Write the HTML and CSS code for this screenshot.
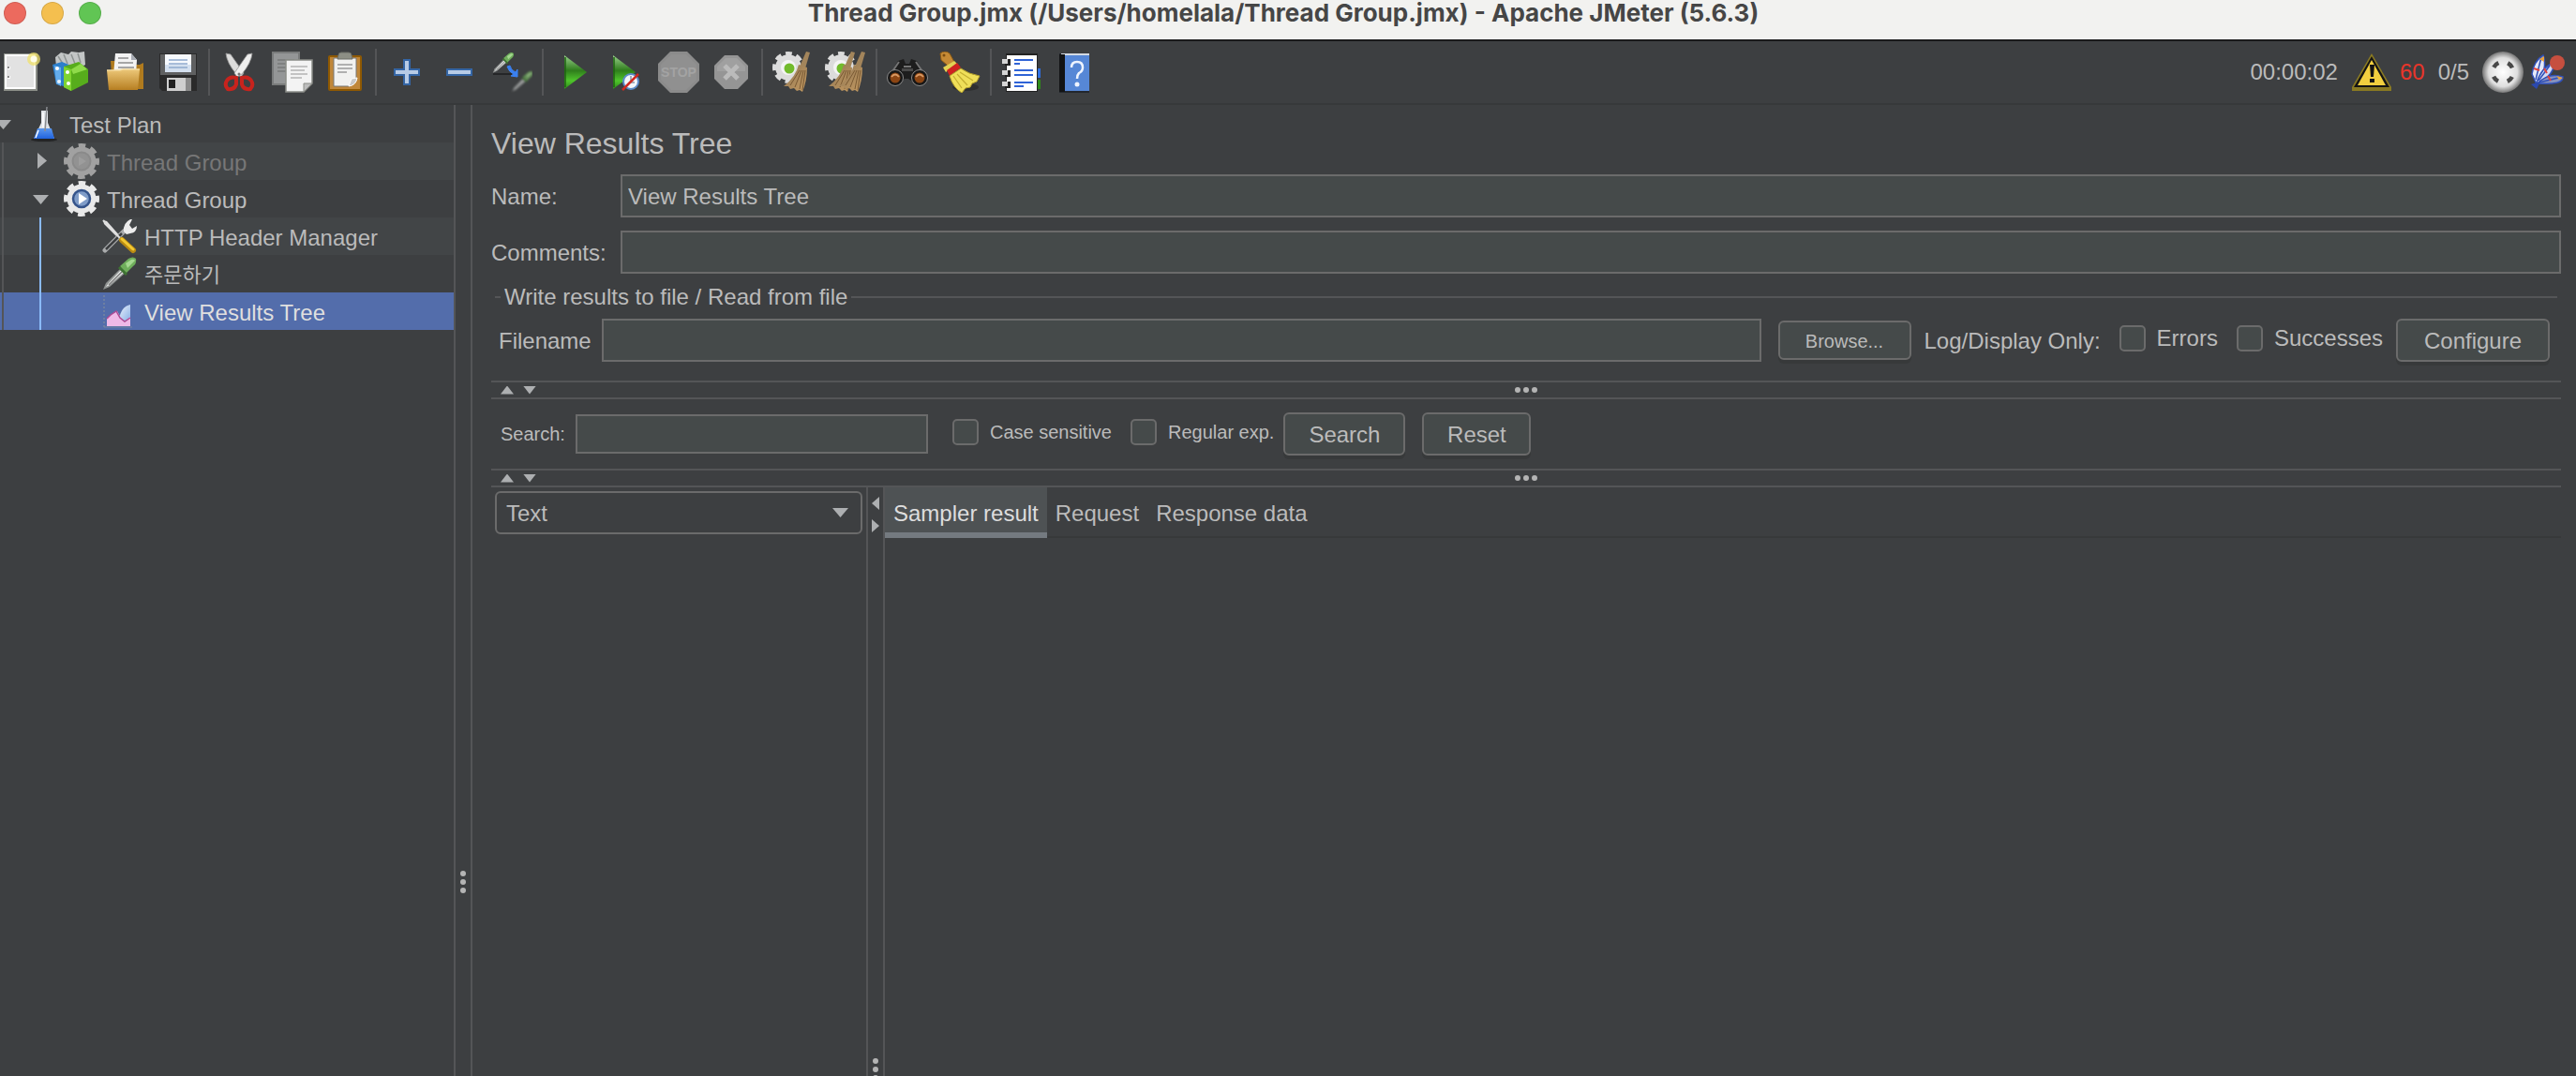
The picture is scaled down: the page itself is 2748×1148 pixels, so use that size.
FILE: index.html
```
<!DOCTYPE html>
<html lang="en">
<head>
    <meta charset="UTF-8">
    <meta name="viewport" content="width=device-width, initial-scale=1.0">
    <title>Thread Group.jmx - Apache JMeter (5.6.3)</title>
    <link rel="stylesheet" href="styles.css">
</head>
<body>
    <!-- Shared shapes and gradients -->
    <svg class="defs" width="0" height="0" aria-hidden="true">
        <defs>
            <linearGradient id="gPlay" x1="0" y1="0" x2="0" y2="1">
                <stop offset="0" stop-color="#9ad08c"/>
                <stop offset=".45" stop-color="#2f7d1c"/>
                <stop offset=".75" stop-color="#4fc52c"/>
                <stop offset="1" stop-color="#2f8a1a"/>
            </linearGradient>
            <linearGradient id="gFolder" x1="0" y1="0" x2="0" y2="1">
                <stop offset="0" stop-color="#ecc778"/>
                <stop offset="1" stop-color="#b77f22"/>
            </linearGradient>
            <linearGradient id="gBristle" x1="0" y1="0" x2="1" y2="1">
                <stop offset="0" stop-color="#8f7654"/>
                <stop offset="1" stop-color="#c49a61"/>
            </linearGradient>
            <linearGradient id="gFlask" x1="0" y1="0" x2="0" y2="1">
                <stop offset="0" stop-color="#5c98ee"/>
                <stop offset="1" stop-color="#1f62dd"/>
            </linearGradient>
            <linearGradient id="gBlue" x1="0" y1="0" x2="1" y2="1">
                <stop offset="0" stop-color="#eef3fb"/>
                <stop offset="1" stop-color="#86aee6"/>
            </linearGradient>
            <radialGradient id="gSphere">
                <stop offset="0" stop-color="#ffffff"/>
                <stop offset=".7" stop-color="#dedede"/>
                <stop offset="1" stop-color="#757575"/>
            </radialGradient>
            <symbol id="gear" viewBox="0 0 38 38">
                <circle cx="19" cy="19" r="15.5" fill="none" stroke="currentColor" stroke-width="7" stroke-dasharray="7 5.17" stroke-dashoffset="3.5"/>
                <circle cx="19" cy="19" r="15.5" fill="currentColor"/>
            </symbol>
            <symbol id="dropper" viewBox="0 0 38 38">
                <path d="M2 36l3-7L22 12l5 5L9 33z" fill="#8f9291"/>
                <path d="M5 33l3-4L22 14l3 3L9 31z" fill="#eceeed"/>
                <path d="M8 31L22 17" stroke="#777" stroke-width="1.4"/>
                <path d="M20 11l9-8q5-3 8 0q1 5-3 8l-8 8z" fill="#6fae5b"/>
                <path d="M26 8l6-4q3-1 4 1l-8 8z" fill="#a4d890"/>
                <path d="M19 12l8 8" stroke="#3e7332" stroke-width="3"/>
            </symbol>
            <symbol id="whisk" viewBox="0 0 30 44">
                <path d="M25 0l4 1-5 17-6-2z" fill="#a3855b"/>
                <path d="M17 14l9 3q0 14-5 26l-3-2-3 1-3-3-4 1-2-3-5 0Q14 27 17 14z" fill="url(#gBristle)"/>
                <path d="M18 20L8 36M20 20l-7 18M22 20l-4 20M24 20l-3 21" stroke="#7a5a34" stroke-width="1"/>
            </symbol>
        </defs>
    </svg>

    <div class="app">
        <header class="titlebar">
            <div class="lights">
                <span class="light light-close"></span>
                <span class="light light-min"></span>
                <span class="light light-max"></span>
            </div>
            <h1 class="window-title">Thread Group.jmx (/Users/homelala/Thread Group.jmx) - Apache JMeter (5.6.3)</h1>
        </header>

        <div class="toolbar">
            <button class="tool" type="button" aria-label="New">
                <svg viewBox="0 0 44 44">
                    <path d="M4 2h36v40H4z" fill="#8b8e88"/>
                    <path d="M5 3h33v37H5z" fill="#fff"/>
                    <path d="M7 5h29v33H7z" fill="#e2e2e2"/>
                    <path d="M8 16h3v3H8zM8 26h3v3H8z" fill="#fff"/>
                    <path d="M8 16h2v2H8zM8 26h2v2H8z" fill="#8a8a8a"/>
                    <circle cx="36" cy="8" r="7" fill="#f0e26a" opacity=".75"/>
                    <circle cx="36" cy="8" r="3.5" fill="#fffde8"/>
                </svg>
            </button>
            <button class="tool" type="button" aria-label="Templates">
                <svg viewBox="0 0 44 44">
                    <path d="M3 6l6-5 8 2 3-3 8 1 6-1 1 14-14 8L4 16z" fill="#c3c6c6"/>
                    <path d="M6 5l5 8M12 3l4 10M20 3l4 10M27 2l3 10" stroke="#8e9392" stroke-width="1.5"/>
                    <path d="M0 14l10-3 10 4v24L4 35z" fill="#2d7fcb"/>
                    <path d="M2 15l7 2v20l-5-3z" fill="#64aceb"/>
                    <circle cx="5" cy="18" r="2" fill="#fff"/><circle cx="7" cy="32" r="2" fill="#e8f4ff"/>
                    <path d="M12 16l16-5 10 8v14L20 42l-8-4z" fill="#57ad1c"/>
                    <path d="M12 16l8 3v23l-8-4z" fill="#7fd331"/>
                    <path d="M20 19l10-6 7 6-15 5z" fill="#8fdb4a"/>
                    <circle cx="16" cy="22" r="2" fill="#fff"/><circle cx="17" cy="34" r="2" fill="#fff"/>
                </svg>
            </button>
            <button class="tool" type="button" aria-label="Open">
                <svg viewBox="0 0 44 44">
                    <path d="M6 10h8l3 4h20l4-2v28H8z" fill="#b07b1e"/>
                    <path d="M11 2h17l6 7-1 16H9z" fill="#f3f3f3"/>
                    <path d="M28 2l6 7h-6z" fill="#a8acb4"/>
                    <path d="M14 7h11M14 12h16M14 17h17" stroke="#8d8d8d" stroke-width="1.5"/>
                    <path d="M2 20h14l3-1h18l-2 22H4z" fill="url(#gFolder)"/>
                    <path d="M2 20h14l3-1h18" fill="none" stroke="#f5dca0" stroke-width="1.5"/>
                </svg>
            </button>
            <button class="tool" type="button" aria-label="Save">
                <svg viewBox="0 0 44 44">
                    <path d="M2 2h40v40H5l-3-3z" fill="#2a2a2a"/>
                    <path d="M3 3h38v22H3z" fill="#5f6061"/>
                    <path d="M8 3h28v19H8z" fill="#f6f9fd"/>
                    <path d="M8 14h28v8H8z" fill="#d4e0ef"/>
                    <path d="M12 9h20M12 13h20M12 17h20" stroke="#8fa9cd" stroke-width="1.5"/>
                    <path d="M10 28h26v14H10z" fill="#cfcfcf"/>
                    <path d="M30 28h6v14h-6z" fill="#8b8b8b"/>
                    <path d="M12 30h7v9h-7z" fill="#222"/>
                </svg>
            </button>
            <span class="tool-sep"></span>
            <button class="tool" type="button" aria-label="Cut">
                <svg viewBox="0 0 44 44">
                    <path d="M7 2l5 1 14 20-3 4-5-3Q8 12 7 2z" fill="#dcdcdb" stroke="#999" stroke-width=".8"/>
                    <path d="M35 2l-5 1-14 20 3 4 5-3Q34 12 35 2z" fill="#efefee" stroke="#999" stroke-width=".8"/>
                    <path d="M18 28q-7-2-10 3t1 9q7 1 9-5zM24 28q7-2 10 3t-1 9q-7 1-9-5z" fill="none" stroke="#c7231d" stroke-width="4"/>
                    <circle cx="21" cy="24" r="1.5" fill="#777"/>
                </svg>
            </button>
            <button class="tool" type="button" aria-label="Copy">
                <svg viewBox="0 0 44 44">
                    <path d="M1 1h28v34H1z" fill="#949697" stroke="#797b7b" stroke-width="2"/>
                    <path d="M6 9h18M6 13h18M6 17h10M6 21h10" stroke="#77797a" stroke-width="1.5"/>
                    <path d="M15 9h28v25l-9 9H15z" fill="#f3f3f3" stroke="#8b8d88" stroke-width="1.5"/>
                    <path d="M43 34h-9v9z" fill="#bdbdbd" stroke="#8b8d88"/>
                    <path d="M20 16h18M20 20h15M20 24h18M20 28h12" stroke="#b4b4b4" stroke-width="1.5"/>
                </svg>
            </button>
            <button class="tool" type="button" aria-label="Paste">
                <svg viewBox="0 0 44 44">
                    <rect x="4" y="4" width="36" height="38" rx="2" fill="#8f5902"/>
                    <rect x="6" y="6" width="32" height="34" fill="#c0873a"/>
                    <path d="M10 7h24v22l-7 8H10z" fill="#f1f1f0" stroke="#777" stroke-width="1"/>
                    <path d="M35 28l-6 1-3 8q8-1 9-9z" fill="#c9c9c9" stroke="#fff"/>
                    <path d="M14 14h16M14 18h16M14 22h10" stroke="#9a9a9a" stroke-width="1.5"/>
                    <path d="M15 4q0-3 3-3h8q3 0 3 3l1 4H14z" fill="#8d8f85" stroke="#6d6f66"/>
                </svg>
            </button>
            <span class="tool-sep"></span>
            <button class="tool" type="button" aria-label="Expand All">
                <svg viewBox="0 0 44 44">
                    <path d="M18 8h8v10h10v8H26v10h-8V26H8v-8h10z" fill="#3465a4"/>
                    <path d="M20 10h4v10h10v4H24v10h-4V24H10v-4h10z" fill="#b7cbe6"/>
                </svg>
            </button>
            <button class="tool" type="button" aria-label="Collapse All">
                <svg viewBox="0 0 44 44">
                    <path d="M8 18h28v8H8z" fill="#3465a4"/>
                    <path d="M10 20h24v4H10z" fill="#b7cbe6"/>
                </svg>
            </button>
            <button class="tool" type="button" aria-label="Toggle">
                <svg viewBox="0 0 44 44">
                    <path d="M2 24h20" stroke="#1e1f20" stroke-width="1.5"/>
                    <use href="#dropper" x="0" y="0" width="25" height="24"/>
                    <g class="faded"><use href="#dropper" x="21" y="20" width="24" height="24"/></g>
                    <path d="M17 16q2 6 7 8l-3 2 7 1 0-8-2 3q-5-2-6-7z" fill="#3a80f0" stroke="#3a80f0"/>
                </svg>
            </button>
            <span class="tool-sep"></span>
            <button class="tool" type="button" aria-label="Start">
                <svg viewBox="0 0 44 44">
                    <path d="M12 4v36l24-18z" fill="url(#gPlay)"/>
                    <path d="M13 6v32" stroke="#1c6210" stroke-width="1.5"/>
                </svg>
            </button>
            <button class="tool" type="button" aria-label="Start no pauses">
                <svg viewBox="0 0 44 44">
                    <path d="M8 4v36l24-18z" fill="url(#gPlay)"/>
                    <path d="M9 6v32" stroke="#1c6210" stroke-width="1.5"/>
                    <circle cx="27" cy="32" r="8" fill="#f3f6fa" stroke="#5c8bc8" stroke-width="2"/>
                    <path d="M27 26v7h4" fill="none" stroke="#8b98a8" stroke-width="1.5"/>
                    <path d="M18 41l17-17" stroke="#cf2a22" stroke-width="2.5"/>
                </svg>
            </button>
            <button class="tool" type="button" aria-label="Stop" disabled>
                <svg viewBox="0 0 44 44">
                    <path d="M13 0h18l13 13v18L31 44H13L0 31V13z" fill="#8b8b8b"/>
                    <path d="M14 3h16l11 11v16L30 41H14L3 30V14z" fill="#909090"/>
                    <text class="stop-text" x="22" y="27" text-anchor="middle">STOP</text>
                </svg>
            </button>
            <button class="tool" type="button" aria-label="Shutdown" disabled>
                <svg viewBox="0 0 44 44">
                    <path d="M15 4h14l11 11v14L29 40H15L4 29V15z" fill="#959595"/>
                    <path d="M16 7h12l9 9v5H7v-5z" fill="#a0a0a0"/>
                    <path d="M15 15l14 14M29 15L15 29" stroke="#bbb" stroke-width="5"/>
                </svg>
            </button>
            <span class="tool-sep"></span>
            <button class="tool" type="button" aria-label="Clear">
                <svg viewBox="0 0 44 44">
                    <g color="#dcdcdc"><use href="#gear" x="0" y="0" width="34" height="34"/></g>
                    <circle cx="17" cy="17" r="8" fill="#f4f4f4"/>
                    <circle cx="18" cy="18" r="5.5" fill="#72bb2c"/>
                    <use href="#whisk" x="11" y="0" width="30" height="44"/>
                </svg>
            </button>
            <button class="tool" type="button" aria-label="Clear All">
                <svg viewBox="0 0 44 44">
                    <g color="#dcdcdc"><use href="#gear" x="0" y="0" width="34" height="34"/></g>
                    <circle cx="17" cy="17" r="8" fill="#f4f4f4"/>
                    <circle cx="18" cy="18" r="5.5" fill="#72bb2c"/>
                    <use href="#whisk" x="3" y="0" width="30" height="44"/>
                    <use href="#whisk" x="14" y="0" width="30" height="44"/>
                </svg>
            </button>
            <span class="tool-sep"></span>
            <button class="tool" type="button" aria-label="Search">
                <svg viewBox="0 0 44 44">
                    <path d="M12 10l6-2 2 5h4l2-5 6 2 11 18-8 9-12-8h-4L9 37 1 28z" fill="#1d1d1d"/>
                    <path d="M13 11l-9 13M31 11l9 13M18 16h8" stroke="#747474" stroke-width="2"/>
                    <path d="M16 18h12v3H16z" fill="#484848"/>
                    <circle cx="9" cy="28" r="8.5" fill="#161616" stroke="#8a8a8a" stroke-width="1"/>
                    <circle cx="35" cy="28" r="8.5" fill="#161616" stroke="#8a8a8a" stroke-width="1"/>
                    <circle cx="9" cy="28" r="5.5" fill="#8b4513"/><circle cx="35" cy="28" r="5.5" fill="#8b4513"/>
                    <path d="M5 27q4-5 8 0M31 27q4-5 8 0" fill="none" stroke="#d99a64" stroke-width="2"/>
                </svg>
            </button>
            <button class="tool" type="button" aria-label="Reset Search">
                <svg viewBox="0 0 44 44">
                    <ellipse cx="28" cy="38" rx="14" ry="4" fill="#2e2f30"/>
                    <path d="M1 2q5-4 10 0l5 9-7 4-7-6z" fill="#c58a35" stroke="#8a5a15"/>
                    <circle cx="5" cy="4" r="1.5" fill="#7b4d10"/>
                    <path d="M4 17l12-7 3 3-12 9z" fill="#e2d254"/>
                    <path d="M8 20l11-8 4 5-12 9z" fill="#cf2320"/>
                    <path d="M11 26l12-8q8 6 20 8l-3 6-5 2-2 4-5 1-4 5q-9-5-13-18z" fill="#efdf59" stroke="#b5a12a" stroke-width="1"/>
                    <path d="M15 26l9 13M19 24l11 12M22 22l14 9" stroke="#c3ae31" stroke-width="1.2"/>
                </svg>
            </button>
            <span class="tool-sep"></span>
            <button class="tool" type="button" aria-label="Function Helper">
                <svg viewBox="0 0 44 44">
                    <path d="M36 18h6v10h-6z" fill="#2f6fe0"/><path d="M36 30h6v10h-6z" fill="#2f8a1a"/>
                    <path d="M5 2h34v41H5z" fill="#222"/>
                    <path d="M6 4h32v38H6z" fill="#fff"/>
                    <path d="M4 8h6v7H4zM4 20h6v7H4zM4 32h6v7H4z" fill="#222"/>
                    <path d="M1 8h6v5H1zM1 20h6v5H1zM1 32h6v5H1z" fill="#d5d5d5"/>
                    <path d="M14 9h20M14 20h20M14 25h20M14 33h20" stroke="#2f63d6" stroke-width="2"/>
                    <path d="M14 13h6M14 37h10" stroke="#2f63d6" stroke-width="2"/>
                </svg>
            </button>
            <button class="tool" type="button" aria-label="Help">
                <svg viewBox="0 0 44 44">
                    <path d="M6 2h32v42H6z" fill="#23272e"/>
                    <path d="M8 2h30v2H8z" fill="#d4dae3"/>
                    <path d="M12 4h26v38H12z" fill="#5687d6"/>
                    <path d="M6 3h6v40H6z" fill="#121314"/>
                    <path d="M19 17q0-6 6-6t6 6q0 4-4 6-2 2-2 6" fill="none" stroke="#eef4ff" stroke-width="2.5"/>
                    <circle cx="25" cy="35" r="2.5" fill="#eef4ff"/>
                </svg>
            </button>

            <div class="status">
                <span>00:00:02</span>
                <button class="warn" type="button">
                    <svg viewBox="0 0 44 44" aria-hidden="true">
                        <path d="M22 2L1 38v4h42v-4z" fill="#8a7a22"/>
                        <path d="M22 5L3 38h38z" fill="#141414"/>
                        <path d="M22 9L7 36h30z" fill="#f2cf3f"/>
                        <path d="M20 14h5l-1 13h-3z" fill="#141414"/>
                        <rect x="20" y="29" width="5" height="4" fill="#141414"/>
                    </svg>
                    <span>60</span>
                </button>
                <span>0/5</span>
                <div class="status-icons">
                    <svg viewBox="0 0 44 44" aria-hidden="true">
                        <circle cx="22" cy="22" r="22" fill="url(#gSphere)"/>
                        <circle cx="22" cy="22" r="11" fill="none" stroke="#484848" stroke-width="4.5" stroke-dasharray="7 10.28" stroke-dashoffset="-5.14"/>
                    </svg>
                    <svg viewBox="0 0 44 44" aria-hidden="true">
                        <path d="M6 35L1 24Q3 10 13 4q5 14-6 29z" fill="#e4e9fa" stroke="#3050b8" stroke-width="1.5"/>
                        <path d="M6 33Q12 16 24 12q2 12-17 22z" fill="#d3dbf5" stroke="#3050b8" stroke-width="1.5"/>
                        <path d="M7 34q12-12 27-7 1 9-27 7z" fill="#8793bd" stroke="#3050b8" stroke-width="1.5"/>
                        <path d="M11 6l-6 24M20 15L8 31M29 28L9 33" stroke="#3050b8" stroke-width="1.5"/>
                        <path d="M3 18l6 2M14 18l3 5M18 26l3 5" stroke="#e2463f" stroke-width="2"/>
                        <path d="M9 8l5-3 0 6zM27 26l7 2-4 2z" fill="#e9a13c"/>
                        <path d="M0 35l10-3-4 8z" fill="#2b49ae"/>
                        <circle cx="28" cy="12" r="8" fill="#c64f3f"/>
                    </svg>
                </div>
            </div>
        </div>

        <div class="workspace">
            <ul class="tree">
                <li class="node level-0">
                    <span class="twisty open"></span>
                    <svg viewBox="0 0 38 38" aria-hidden="true">
                        <ellipse cx="19" cy="36" rx="14" ry="2" fill="#242526"/>
                        <path d="M16 5h7v13l7 17H8l8-17z" fill="#dfe3e8"/>
                        <path d="M12 24h15l3 11H8z" fill="url(#gFlask)"/>
                        <path d="M18 7v16M13 26l-3 8" stroke="#fff" stroke-width="1.5"/>
                        <path d="M22 1l-2 26" stroke="#888b8f" stroke-width="1.5"/>
                    </svg>
                    <span class="node-text">Test Plan</span>
                </li>
                <li class="node level-1 disabled">
                    <span class="twisty closed"></span>
                    <svg viewBox="0 0 38 38" aria-hidden="true">
                        <g color="#a1a1a1"><use href="#gear" width="38" height="38"/></g>
                        <circle cx="19" cy="19" r="9.5" fill="#929292" stroke="#8a8a8a" stroke-width="2"/>
                        <path d="M16 14v10l8-5z" fill="#9d9d9d"/>
                    </svg>
                    <span class="node-text">Thread Group</span>
                </li>
                <li class="node level-1">
                    <span class="twisty open"></span>
                    <svg viewBox="0 0 38 38" aria-hidden="true">
                        <g color="#e9e9e9"><use href="#gear" width="38" height="38"/></g>
                        <circle cx="19" cy="19" r="9" fill="#7f9cc8" stroke="#35548b" stroke-width="2.5"/>
                        <path d="M16 13v12l9-6z" fill="#fff"/>
                    </svg>
                    <span class="node-text">Thread Group</span>
                </li>
                <li class="node level-2">
                    <svg viewBox="0 0 38 38" aria-hidden="true">
                        <path d="M2 2l4 1 15 17-2 2L3 6z" fill="#e4e4e4"/>
                        <path d="M4 34L25 13" stroke="#a9abac" stroke-width="5" stroke-linecap="round"/>
                        <path d="M5 33L22 16" stroke="#3b3d3f" stroke-width="2.5"/>
                        <path d="M24 14q-1-9 7-13l2 0-3 6 3 4 5-3q0 7-7 8l-4 1z" fill="#ececec"/>
                        <path d="M2 2l18 19" stroke="#dedede" stroke-width="2"/>
                        <path d="M22 23l12 11" stroke="#b98a12" stroke-width="6" stroke-linecap="round"/>
                        <path d="M22 22l12 11" stroke="#f2c832" stroke-width="3" stroke-linecap="round"/>
                    </svg>
                    <span class="node-text">HTTP Header Manager</span>
                </li>
                <li class="node level-2">
                    <svg viewBox="0 0 38 38" aria-hidden="true"><use href="#dropper" width="38" height="38"/></svg>
                    <span class="node-text korean" lang="ko">주문하기</span>
                </li>
                <li class="node level-2 selected">
                    <svg viewBox="0 0 38 38" aria-hidden="true">
                        <path d="M3 2v34" stroke="#7785a0" stroke-width="1.5" stroke-dasharray="2 2"/>
                        <path d="M3 36h30" stroke="#7785a0"/>
                        <path d="M19 28q2-14 12-16v16l-7 2z" fill="url(#gBlue)"/>
                        <path d="M6 35v-8l4-4 7-4 4 7 4 4 6-5v10z" fill="#efb9e8"/>
                        <path d="M6 27l4-4 6-4 4 7 5 4 6-4" fill="none" stroke="#ad4a94" stroke-width="1.5"/>
                    </svg>
                    <span class="node-text">View Results Tree</span>
                </li>
            </ul>

            <div class="split split-v"><span class="dots"></span></div>

            <main class="panel">
                <h2 class="panel-title">View Results Tree</h2>
                <div class="form-grid">
                    <label for="name">Name:</label>
                    <input id="name" class="field" type="text" value="View Results Tree">
                    <label for="comments">Comments:</label>
                    <input id="comments" class="field" type="text">
                </div>

                <fieldset class="file-box">
                    <legend>Write results to file / Read from file</legend>
                    <div class="file-row">
                        <label for="filename">Filename</label>
                        <input id="filename" class="field filename" type="text">
                        <button class="btn btn-small" type="button">Browse...</button>
                        <span class="log-label">Log/Display Only:</span>
                        <label class="check"><input type="checkbox">Errors</label>
                        <label class="check"><input type="checkbox">Successes</label>
                        <button class="btn configure" type="button">Configure</button>
                    </div>
                </fieldset>

                <div class="split split-h"><span class="arrow up"></span><span class="arrow down"></span><span class="dots"></span></div>

                <div class="search-row">
                    <label for="search">Search:</label>
                    <input id="search" class="field field-small" type="text">
                    <label class="check"><input type="checkbox">Case sensitive</label>
                    <label class="check"><input type="checkbox">Regular exp.</label>
                    <button class="btn btn-search" type="button">Search</button>
                    <button class="btn btn-reset" type="button">Reset</button>
                </div>

                <div class="split split-h"><span class="arrow up"></span><span class="arrow down"></span><span class="dots"></span></div>

                <div class="results">
                    <div class="results-list">
                        <div class="combo">
                            <select aria-label="Renderer">
                                <option>Text</option>
                            </select>
                            <span class="combo-arrow"></span>
                        </div>
                    </div>
                    <div class="split split-v"><span class="arrow left"></span><span class="arrow right"></span><span class="dots"></span></div>
                    <div class="results-detail">
                        <div class="tabs" role="tablist">
                            <button class="tab active" type="button" role="tab" aria-selected="true">Sampler result</button>
                            <button class="tab" type="button" role="tab" aria-selected="false">Request</button>
                            <button class="tab" type="button" role="tab" aria-selected="false">Response data</button>
                        </div>
                    </div>
                </div>
            </main>
        </div>
    </div>
</body>
</html>
```

FILE: styles.css
```
:root {
    --bg: #3d3f41;
    --field: #454a4a;
    --border: #6b6b6b;
    --line: #545557;
    --line-dark: #37393a;
    --stripe: #424547;
    --text: #bbbbbb;
    --glyph: #adafb1;
    --select: #536dab;
}

* {
    box-sizing: border-box;
}

body {
    margin: 0;
    background: var(--bg);
    color: var(--text);
    font-family: "Liberation Sans", "Noto Sans CJK KR", sans-serif;
    font-size: 24px;
    line-height: 28px;
}

button,
input,
select {
    font: inherit;
    color: inherit;
}

.defs {
    position: absolute;
}

.app {
    display: flex;
    flex-direction: column;
    height: 100vh;
    overflow: hidden;
}

/* Window title bar */
.titlebar {
    position: relative;
    flex: none;
    height: 44px;
    padding-right: 10px;
    background: #f2f2f0;
    border-bottom: 2px solid #1b1b1c;
    text-align: center;
}

.lights {
    position: absolute;
    left: 4px;
    top: 2px;
    display: flex;
    gap: 16px;
}

.light {
    width: 24px;
    height: 24px;
    border-radius: 50%;
    border: 1px solid rgba(0, 0, 0, 0.12);
}

.light-close {
    background: #ec6a5e;
}

.light-min {
    background: #f4bf4f;
}

.light-max {
    background: #61c554;
}

.window-title {
    margin: 0;
    color: #464646;
    font-family: Inter, sans-serif;
    font-size: 26px;
    font-weight: 700;
    line-height: 28px;
}

/* Toolbar */
.toolbar {
    flex: none;
    display: flex;
    align-items: center;
    gap: 12px;
    height: 68px;
    padding-right: 4px;
    border-bottom: 2px solid var(--line-dark);
}

.tool {
    flex: none;
    width: 44px;
    height: 44px;
    padding: 0;
    border: 0;
    background: none;
}

.tool svg {
    display: block;
    width: 44px;
    height: 44px;
}

.tool-sep {
    flex: none;
    width: 2px;
    height: 50px;
    margin: 0 -2px;
    background: var(--line);
}

.stop-text {
    fill: #a3a3a3;
    font-size: 14px;
    font-weight: 700;
}

.faded {
    opacity: 0.7;
    filter: blur(1px);
}

.status {
    display: flex;
    align-items: center;
    gap: 14px;
    margin-left: auto;
}

.status svg {
    display: block;
    width: 44px;
    height: 44px;
}

.status-icons {
    display: flex;
    gap: 8px;
}

.warn {
    display: flex;
    align-items: center;
    gap: 8px;
    padding: 0;
    border: 0;
    background: none;
    color: #e8352a;
}

/* Workspace; taller than the window, the rest is clipped */
.workspace {
    flex: none;
    display: flex;
    height: 1658px;
}

.tree {
    flex: none;
    width: 484px;
    margin: 0;
    padding: 0;
    list-style: none;
}

.node {
    position: relative;
    display: flex;
    align-items: center;
    gap: 8px;
    height: 40px;
}

.node svg {
    flex: none;
    width: 38px;
    height: 38px;
}

.node-text {
    padding-top: 4px;
}

.korean {
    font-size: 22px;
}

.node:nth-child(even) {
    background: var(--stripe);
}

.node.selected {
    background: var(--select);
    color: #dfdfdf;
}

.node.disabled {
    color: #777777;
}

.level-0 {
    padding-left: 28px;
}

.level-1 {
    padding-left: 68px;
}

.level-2 {
    padding-left: 108px;
}

/* Indent guides */
.level-1.disabled::before,
.level-1::before,
.level-2::before,
.level-2::after {
    content: "";
    position: absolute;
    top: 0;
    bottom: 0;
    left: 2px;
    width: 2px;
    background: var(--line);
}

.level-2::after {
    left: 42px;
    background: #8abaf8;
}

.twisty {
    position: absolute;
    background: var(--glyph);
}

.twisty.open {
    top: 16px;
    width: 17px;
    height: 10px;
    clip-path: polygon(0 0, 100% 0, 50% 100%);
}

.twisty.closed {
    top: 11px;
    left: 40px;
    width: 10px;
    height: 17px;
    clip-path: polygon(0 0, 100% 50%, 0 100%);
}

.level-0 .twisty {
    left: -5px;
}

.level-1 .twisty.open {
    left: 35px;
}

/* Split bars */
.split {
    flex: none;
    position: relative;
    display: flex;
}

.split-v {
    flex-direction: column;
    align-items: center;
    gap: 10px;
    width: 20px;
    border: solid var(--line);
    border-width: 0 2px;
}

.split-h {
    align-items: center;
    gap: 10px;
    height: 20px;
    padding-left: 10px;
    border: solid var(--line);
    border-width: 2px 0;
}

.dots {
    position: absolute;
    top: 50%;
    left: 50%;
    width: 6px;
    height: 6px;
    margin: -3px;
    border-radius: 50%;
    background: #b4b4b4;
}

.split-v > .dots {
    box-shadow: 0 -9px #b4b4b4, 0 9px #b4b4b4;
}

.split-h > .dots {
    box-shadow: -9px 0 #b4b4b4, 9px 0 #b4b4b4;
}

.arrow {
    background: var(--glyph);
}

.up,
.down {
    width: 14px;
    height: 9px;
}

.left,
.right {
    width: 8px;
    height: 14px;
}

.up {
    clip-path: polygon(50% 0, 100% 100%, 0 100%);
}

.down {
    clip-path: polygon(0 0, 100% 0, 50% 100%);
}

.left {
    clip-path: polygon(0 50%, 100% 0, 100% 100%);
}

.right {
    clip-path: polygon(0 0, 100% 50%, 0 100%);
}

/* Right hand panel */
.panel {
    flex: 1;
    display: flex;
    flex-direction: column;
    min-width: 0;
    padding: 22px 16px 8px 20px;
}

.panel-title {
    margin: 0 0 14px;
    font-size: 32px;
    font-weight: 400;
    line-height: 38px;
}

.form-grid {
    display: grid;
    grid-template-columns: 138px 1fr;
    align-items: center;
    row-gap: 14px;
}

.form-grid label,
.file-row > label:first-child,
.log-label {
    padding-top: 2px;
}

.field {
    min-width: 0;
    height: 46px;
    padding: 2px 6px 0;
    border: 2px solid var(--border);
    border-radius: 0;
    background: var(--field);
    outline: 0;
}

.file-box {
    margin: 11px 4px 0;
    padding: 0;
    border: 0 solid var(--line);
    border-top-width: 2px;
}

.file-box legend {
    margin-left: 6px;
    padding: 0 4px;
}

.file-row {
    display: flex;
    align-items: center;
    padding: 9px 8px 20px 4px;
}

.filename {
    flex: 1;
    margin: 0 18px 0 11px;
}

.btn {
    height: 46px;
    padding: 2px 0 0;
    border: 2px solid var(--border);
    border-radius: 6px;
    background: var(--field);
    box-shadow: 0 4px var(--line-dark);
}

.btn-small {
    width: 142px;
    height: 42px;
    font-size: 20px;
}

.configure {
    width: 164px;
    margin-left: 14px;
}

.log-label {
    margin-left: 14px;
}

.check {
    display: flex;
    align-items: center;
    gap: 12px;
    margin-left: 20px;
    padding-bottom: 5px;
}

.check input {
    appearance: none;
    width: 28px;
    height: 28px;
    margin: 0;
    border: 2px solid var(--border);
    border-radius: 5px;
    background: var(--field);
}

.search-row {
    display: flex;
    align-items: center;
    height: 74px;
    padding-left: 10px;
    font-size: 20px;
}

.field-small {
    width: 376px;
    height: 42px;
    margin: 0 6px 0 11px;
}

.search-row .btn {
    font-size: 24px;
}

.btn-search {
    width: 130px;
    margin: 0 18px 0 10px;
}

.btn-reset {
    width: 116px;
}

/* Results area */
.results {
    flex: 1;
    display: flex;
}

.results-list {
    width: 400px;
    padding: 4px;
}

.combo {
    position: relative;
}

.combo select {
    appearance: none;
    display: block;
    width: 100%;
    height: 46px;
    padding: 2px 10px 0;
    border: 2px solid var(--border);
    border-radius: 6px;
    background: var(--bg);
}

.combo-arrow {
    position: absolute;
    top: 18px;
    right: 15px;
    width: 17px;
    height: 10px;
    background: var(--glyph);
    clip-path: polygon(0 0, 100% 0, 50% 100%);
    pointer-events: none;
}

.results .split {
    padding-top: 10px;
}

.results-detail {
    flex: 1;
}

.tabs {
    display: flex;
    height: 54px;
    box-shadow: inset 0 -2px var(--line-dark);
}

.tab {
    padding: 8px 9px 0;
    border: 0;
    border-bottom: 6px solid transparent;
    background: none;
}

.tab.active {
    border-bottom-color: #747a80;
    background: #4e5254;
    color: #dddddd;
}
```
